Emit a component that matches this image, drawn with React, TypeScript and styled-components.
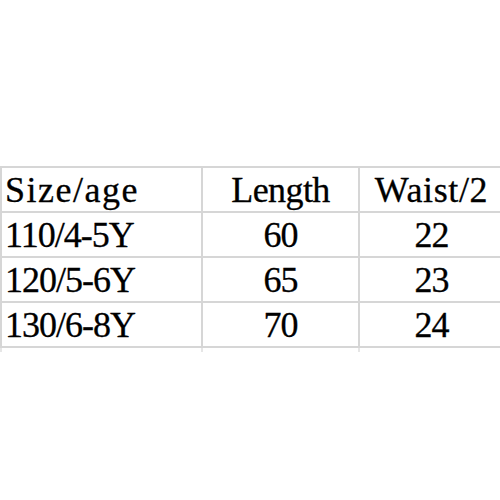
import React from "react";
import styled, { createGlobalStyle } from "styled-components";

const Global = createGlobalStyle`
  html, body {
    margin: 0;
    padding: 0;
    background: #ffffff;
    overflow: hidden;
  }
`;

const Page = styled.div`
  width: 500px;
  height: 500px;
  padding-top: 166px;
  box-sizing: border-box;
  overflow: hidden;
`;

const Grid = styled.div`
  display: grid;
  grid-template-columns: 203px 157px 145px;
  width: 505px;
  border-top: 2px solid #d6d6d6;
`;

const Cell = styled.div<{ $align?: "left" | "center"; $ls?: number; $first?: boolean }>`
  box-sizing: border-box;
  height: 45px;
  border-bottom: 2px solid #d6d6d6;
  border-right: 2px solid #d6d6d6;
  border-left: ${(p) => (p.$first ? "2px solid #d6d6d6" : "none")};
  padding: 1px 0 0 ${(p) => (p.$align === "left" ? 3 : 0)}px;
  text-align: ${(p) => p.$align ?? "center"};
  letter-spacing: ${(p) => p.$ls ?? -1}px;
  font-family: "Liberation Serif", serif;
  font-size: 36px;
  line-height: 42px;
  color: #000000;
  -webkit-text-stroke: 0.3px #000000;
  white-space: nowrap;
  overflow: hidden;
`;

const Tail = styled.div<{ $first?: boolean }>`
  height: 4px;
  border-right: 2px solid #e6e6e6;
  border-left: ${(p) => (p.$first ? "2px solid #e6e6e6" : "none")};
`;

const rows = [
  ["110/4-5Y", "60", "22"],
  ["120/5-6Y", "65", "23"],
  ["130/6-8Y", "70", "24"],
];

export default function App() {
  return (
    <>
      <Global />
      <Page>
        <Grid>
          <Cell $first $align="left" $ls={1.5}>Size/age</Cell>
          <Cell $ls={-0.6}>Length</Cell>
          <Cell $ls={0.6}>Waist/2</Cell>
          {rows.map((r) => (
            <React.Fragment key={r[0]}>
              <Cell $first $align="left">{r[0]}</Cell>
              <Cell>{r[1]}</Cell>
              <Cell>{r[2]}</Cell>
            </React.Fragment>
          ))}
          <Tail $first />
          <Tail />
          <Tail />
        </Grid>
      </Page>
    </>
  );
}
